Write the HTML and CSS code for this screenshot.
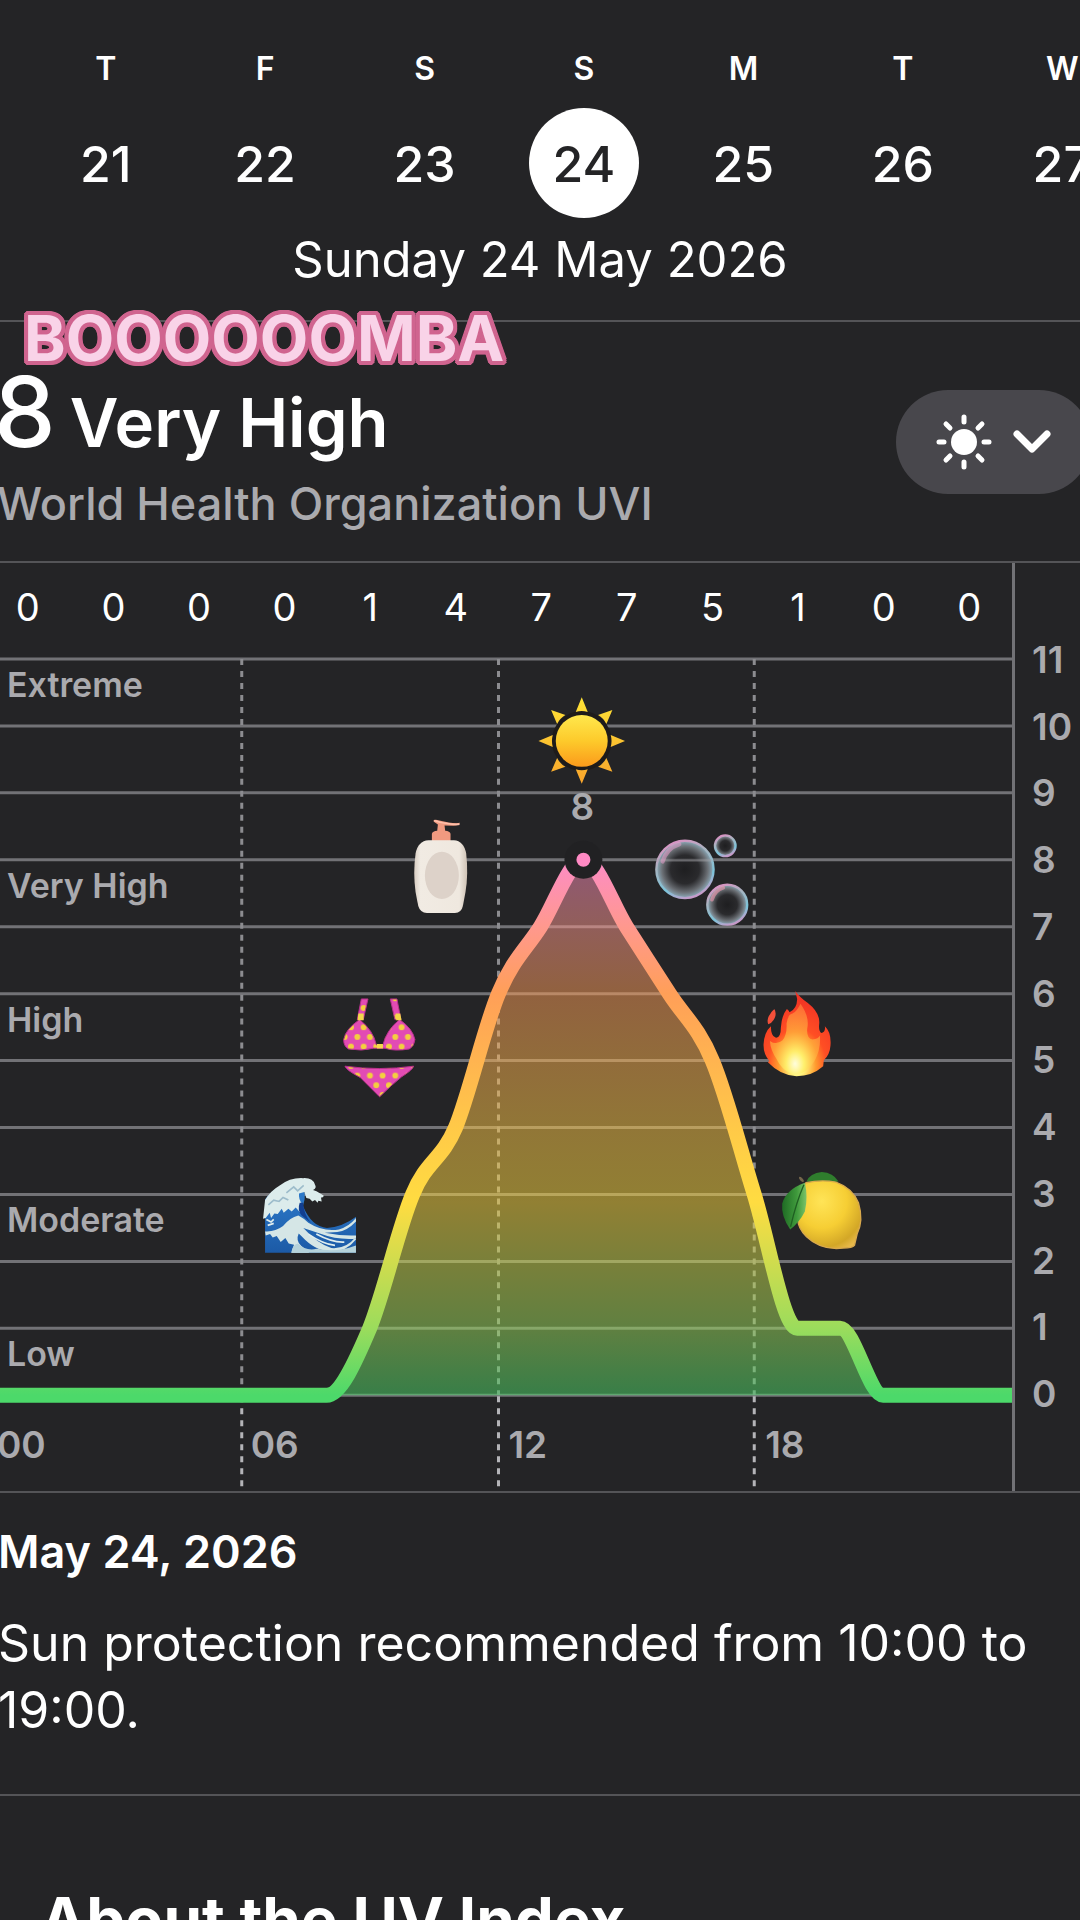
FILE: index.html
```html
<!DOCTYPE html>
<html lang="en">
<head>
    <meta charset="UTF-8">
    <meta name="viewport" content="width=device-width, initial-scale=1.0">
    <title>UV Index</title>
    <link rel="stylesheet" href="styles.css">
</head>
<body>
    <header class="calendar">
        <div class="week">
            <button class="day"><span class="day-name">T</span><span class="day-number">21</span></button>
            <button class="day"><span class="day-name">F</span><span class="day-number">22</span></button>
            <button class="day"><span class="day-name">S</span><span class="day-number">23</span></button>
            <button class="day selected"><span class="day-name">S</span><span class="day-number">24</span></button>
            <button class="day"><span class="day-name">M</span><span class="day-number">25</span></button>
            <button class="day"><span class="day-name">T</span><span class="day-number">26</span></button>
            <button class="day"><span class="day-name">W</span><span class="day-number">27</span></button>
        </div>
        <p class="full-date">Sunday 24 May 2026</p>
    </header>

    <main>
        <section class="summary">
            <p class="sticker">BOOOOOOMBA</p>
            <div>
                <h1><span class="uv-value">8</span> <span>Very High</span></h1>
                <p class="source">World Health Organization UVI</p>
            </div>
            <button class="picker" aria-label="Choose condition">
                <svg width="56" height="56" viewBox="0 0 56 56">
                    <circle cx="28" cy="28" r="13" fill="#fff"/>
                    <path d="M28 3v5M28 48v5M3 28h5M48 28h5M10 10l4 4M42 42l4 4M46 10l-4 4M14 42l-4 4" stroke="#fff" stroke-width="5" stroke-linecap="round"/>
                </svg>
                <svg width="38" height="24" viewBox="0 0 38 24">
                    <path d="M4 4l15 15L34 4" fill="none" stroke="#fff" stroke-width="7" stroke-linecap="round" stroke-linejoin="round"/>
                </svg>
            </button>
        </section>

        <section class="chart">
            <div class="plot">
                <div class="values">
                    <span>0</span><span>0</span><span>0</span><span>0</span><span>1</span><span>4</span>
                    <span>7</span><span>7</span><span>5</span><span>1</span><span>0</span><span>0</span>
                </div>
                <svg class="graph" viewBox="0 0 1028 852">
                    <defs>
                        <linearGradient id="uv" gradientUnits="userSpaceOnUse" x1="0" y1="756" x2="0" y2="220">
                            <stop offset="0" stop-color="#4cd96a"/>
                            <stop offset=".125" stop-color="#9bdc5c"/>
                            <stop offset=".36" stop-color="#ffdc41"/>
                            <stop offset=".5" stop-color="#ffc948"/>
                            <stop offset=".75" stop-color="#ff9f58"/>
                            <stop offset=".88" stop-color="#ff9890"/>
                            <stop offset="1" stop-color="#fc8cc6"/>
                        </linearGradient>
                        <linearGradient id="sun" x1="0" y1="0" x2="0" y2="1">
                            <stop offset="0" stop-color="#ffe84d"/>
                            <stop offset=".5" stop-color="#fdca2b"/>
                            <stop offset="1" stop-color="#fb9a1b"/>
                        </linearGradient>
                        <linearGradient id="rays" gradientUnits="userSpaceOnUse" x1="0" y1="50" x2="0" y2="310">
                            <stop offset="0" stop-color="#ffe436"/>
                            <stop offset="1" stop-color="#f9a52c"/>
                        </linearGradient>
                        <linearGradient id="rim" x1=".2" y1="0" x2=".6" y2="1">
                            <stop offset="0" stop-color="#e08fc4"/>
                            <stop offset=".35" stop-color="#a9b4c0"/>
                            <stop offset=".75" stop-color="#7cc4da"/>
                            <stop offset="1" stop-color="#c79ac9"/>
                        </linearGradient>
                        <radialGradient id="bubble">
                            <stop offset="0" stop-color="#1c1c1e" stop-opacity=".7"/>
                            <stop offset=".5" stop-color="#2c2c2f" stop-opacity=".8"/>
                            <stop offset=".8" stop-color="#74797f" stop-opacity=".9"/>
                            <stop offset="1" stop-color="#8fb0c0"/>
                        </radialGradient>
                        <linearGradient id="bottle" x1="0" y1="0" x2="1" y2="0">
                            <stop offset="0" stop-color="#d8cdc2"/>
                            <stop offset=".12" stop-color="#f1ebe3"/>
                            <stop offset=".85" stop-color="#efe8df"/>
                            <stop offset="1" stop-color="#cfc2b5"/>
                        </linearGradient>
                        <pattern id="dots" width="38" height="58" patternUnits="userSpaceOnUse" x="94" y="654">
                            <rect width="38" height="58" fill="#e24bb4"/>
                            <circle cx="19" cy="0" r="9" fill="#f3cf3f"/>
                            <circle cx="0" cy="29" r="9" fill="#f3cf3f"/>
                            <circle cx="38" cy="29" r="9" fill="#f3cf3f"/>
                            <circle cx="19" cy="58" r="9" fill="#f3cf3f"/>
                        </pattern>
                        <radialGradient id="fire" cx=".5" cy=".88" r=".8">
                            <stop offset="0" stop-color="#fffde0"/>
                            <stop offset=".15" stop-color="#fff27a"/>
                            <stop offset=".35" stop-color="#ff9a2e"/>
                            <stop offset=".55" stop-color="#ff4f24"/>
                            <stop offset="1" stop-color="#f23324"/>
                        </radialGradient>
                        <radialGradient id="flame" cx=".5" cy=".85" r=".9">
                            <stop offset="0" stop-color="#fffde0"/>
                            <stop offset=".2" stop-color="#fff06a"/>
                            <stop offset=".5" stop-color="#ffa83a"/>
                            <stop offset="1" stop-color="#ff6a38"/>
                        </radialGradient>
                        <radialGradient id="lemon" cx=".38" cy=".3" r=".8">
                            <stop offset="0" stop-color="#ffe457"/>
                            <stop offset=".5" stop-color="#f6ce34"/>
                            <stop offset=".85" stop-color="#d3a727"/>
                            <stop offset="1" stop-color="#e8b94a"/>
                        </radialGradient>
                        <linearGradient id="leaf" x1="0" y1="0" x2="1" y2="0">
                            <stop offset="0" stop-color="#1f6a24"/>
                            <stop offset=".6" stop-color="#3f9a3c"/>
                            <stop offset="1" stop-color="#7cc46a"/>
                        </linearGradient>
                        <linearGradient id="sea" x1="0" y1="0" x2="0" y2="1">
                            <stop offset="0" stop-color="#2f7fd0"/>
                            <stop offset="1" stop-color="#1c5aa6"/>
                        </linearGradient>
                    </defs>

                    <!-- index grid -->
                    <path class="grid" d="M0 19H1028M0 86H1028M0 153H1028M0 220H1028M0 287H1028M0 354H1028M0 421H1028M0 488H1028M0 555H1028M0 622H1028M0 689H1028M0 756H1028"/>
                    <path class="hours" d="M257 19V756M514 19V756M770 19V756"/>
                    <path class="hours below" d="M257 757V850M514 757V850M770 757V850"/>

                    <g class="level">
                        <text x="22" y="57">Extreme</text>
                        <text x="22" y="258">Very High</text>
                        <text x="22" y="392">High</text>
                        <text x="22" y="593">Moderate</text>
                        <text x="22" y="727">Low</text>
                    </g>

                    <!-- uv curve -->
                    <path fill="url(#uv)" opacity=".5" d="M342 756C356 756 371 722 385 689C399 655 414 588 428 555C442 521 457 521 471 488C485 454 500 387 514 354C528 320 542 309 556 287C570 265 585 220 599 220C613 220 628 265 642 287C656 309 671 332 685 354C699 376 714 387 728 421C742 454 756 510 770 555C784 600 799 689 813 689H856C870 689 885 756 899 756Z"/>
                    <path fill="none" stroke="url(#uv)" stroke-width="15" d="M0 756H342C356 756 371 722 385 689C399 655 414 588 428 555C442 521 457 521 471 488C485 454 500 387 514 354C528 320 542 309 556 287C570 265 585 220 599 220C613 220 628 265 642 287C656 309 671 332 685 354C699 376 714 387 728 421C742 454 756 510 770 555C784 600 799 689 813 689H856C870 689 885 756 899 756H1028"/>
                    <circle cx="599" cy="220" r="19" fill="#212123"/>
                    <circle cx="599" cy="220" r="7" fill="#ff8ac4"/>

                    <g class="tick">
                        <text x="598" y="180" text-anchor="middle">8</text>
                        <text x="12" y="819">00</text>
                        <text x="266" y="819">06</text>
                        <text x="524" y="819">12</text>
                        <text x="781" y="819">18</text>
                    </g>

                    <!-- sun and bubbles -->
                    <g transform="translate(535 40) scale(.3333)">
                        <circle cx="187" cy="183" r="90" fill="#1e1b1a"/>
                        <path fill="url(#rays)" d="M187 52l18 44q-18-6-36 0zM187 312l18-44q-18 6-36 0zM57 183l43-18q-5 18 0 36zM317 183l-43-18q5 18 0 36zM95 90l43 15q-16 9-25 27zM279 90l-43 15q16 9 25 27zM95 276l43-15q-16-9-25-27zM279 276l-43-15q16-9 25-27z"/>
                        <circle cx="187" cy="183" r="78" fill="url(#sun)"/>
                        <g fill="url(#bubble)" stroke="url(#rim)" stroke-width="7">
                            <circle cx="497" cy="569" r="86"/>
                            <circle cx="618" cy="498" r="31"/>
                            <circle cx="624" cy="675" r="60"/>
                        </g>
                        <path d="M415 542H579" stroke="#a4a4a8" stroke-opacity=".45" stroke-width="7"/>
                        <path d="M430 545q12-40 50-52" fill="none" stroke="#f0a0cf" stroke-opacity=".5" stroke-width="13" stroke-linecap="round"/>
                        <path d="M578 660q8-28 34-36" fill="none" stroke="#f49ab0" stroke-opacity=".6" stroke-width="11" stroke-linecap="round"/>
                    </g>

                    <!-- lotion and bikini -->
                    <g transform="translate(335 160) scale(.3333)">
                        <path d="M337 124v-22q2-8 16-9l2-19-12-8q-4-6 6-6l38 8q24 4 34 1-2 9-20 9l-26-1 2 16q14 1 16 9v22z" fill="#f09a80"/>
                        <path d="M344 62q20 8 40 9 22 4 36 2" fill="none" stroke="#ffc0aa" stroke-width="5"/>
                        <path d="M327 121h76q30 2 37 40 7 60-2 116l-8 42q-4 20-24 21h-84q-20-1-26-21l-8-42q-8-58 0-116 7-38 39-40z" fill="url(#bottle)"/>
                        <ellipse cx="367" cy="227" rx="51" ry="71" fill="#ddd2c9"/>
                        <g fill="url(#dots)" stroke="#b8308c" stroke-width="3">
                            <path d="M125 598h20l-14 62h-18zM212 598h20l12 62h-18z"/>
                            <path d="M120 660q42 34 50 76h20q10-44 50-76 40 28 46 60-2 20-16 28-44 8-74-2h-34q-36 10-76 2-14-8-14-28 6-32 48-60z"/>
                            <path d="M76 800q104 14 206 0-2 10-36 32-30 24-66 60-36-36-58-58-42-22-46-34z"/>
                        </g>
                        <path d="M116 642h16v20h-18zM228 642h14l4 20h-16zM172 733h18v14h-18z" fill="#f3d84a"/>
                    </g>

                    <!-- wave -->
                    <g transform="translate(255 500) scale(.3333)">
                        <path d="M76 180Q110 132 180 124Q205 160 190 200Q215 262 262 266Q310 262 349 232V340H76z" fill="url(#sea)"/>
                        <path d="M76 182q16-28 44-44 32-24 70-22 30-2 36 20 6 10-6 16 12 4 18 8l14 8q0 8-8 6l2 12-10-2-2 6-8-8-8 4-8-8-10-2-6-18-16 4q-2 18 10 32 6 16-8 24l-12-14-12 12-10-8-14 12-6-12-12 16-10-2-10 14-4-16-12 16-8 2z" fill="#dcecec"/>
                        <path d="M86 196l16-14 16 4 12-12 16 8M140 160l22-18 12 12 18-16" fill="none" stroke="#9dbccb" stroke-width="5"/>
                        <path d="M190 190q4 40 24 60l-28-22q-14-16-6-38z" fill="#123f90"/>
                        <path d="M76 276q30 2 54-16 20-26 46-32 16 8 30 22 44 28 92 20 30-8 51-34v10q-26 28-56 32l-38 2q50 10 94 8v10q-58 4-104-14l-54-18q44 48 84 60 44 4 74-34v8q-30 38-76 36-46 0-88-46l-8-8q-10 22 8 38l24 20h-54l8-24-16-4-10-16-14 12-12-18-12 4-8-10-13 4z" fill="#d5e6e6"/>
                        <path d="M155 340q2-24 20-28 24 24 56 16 60 12 118-10v22z" fill="#b5d2da"/>
                        <path d="M206 284q44 30 80 34M230 284q48 26 84 24M80 240l14 8 8-8M84 258l18-6" fill="none" stroke="#e1eeee" stroke-width="5"/>
                    </g>

                    <!-- fire and lemon -->
                    <g transform="translate(755 320) scale(.3333)">
                        <path d="M106 149q8 16-3 32-8 12-16 13-6-16 6-31 8-12 13-14z" fill="#f4503a"/>
                        <path d="M168 94q14 20 38 36 38 30 34 64-2 20 6 26 14-2 11-20 20 18 17 58-2 28-20 44l-2 18q-34 30-80 30-48-2-86-42l4-4q-18-22-17-50 2-36 22-54 0 30 14 34 16 2 16-30 2-36 18-56 6 4 8 10 22-10 23-40z" fill="url(#fire)"/>
                        <path d="M184 132q28 40 20 76-2 30 16 32 18-2 22-12 4 40-16 76-24 38-54 40-40-4-60-46-18-26-20-54 20 14 38-2 14-16 12-50 4-28 18-30 12-6 24-30z" fill="url(#flame)" opacity=".85"/>
                        <path d="M189 668q-14-12-8-16 8 0 14 14z" fill="#75664c"/>
                        <path d="M202 666q10-24 46-28 34 2 50 28-40 6-96 0z" fill="#2f7d2d"/>
                        <path d="M200 670q46-10 90-2 50 18 68 62 16 54-4 94l-8 34q-6 8-34 8-66 8-110-34-26-26-26-52l4-80z" fill="url(#lemon)" stroke="#d9a94c" stroke-width="4"/>
                        <path d="M197 670q10 42 0 86-16 32-44 54-28-40-24-78 12-42 68-62z" fill="url(#leaf)"/>
                        <path d="M194 676q-22 50-40 126" fill="none" stroke="#1f5f22" stroke-width="4"/>
                    </g>
                </svg>
            </div>
            <div class="axis">
                <span>11</span><span>10</span><span>9</span><span>8</span><span>7</span><span>6</span>
                <span>5</span><span>4</span><span>3</span><span>2</span><span>1</span><span>0</span>
            </div>
        </section>

        <section class="advice">
            <h2>May 24, 2026</h2>
            <p>Sun protection recommended from 10:00 to 19:00.</p>
        </section>

        <section class="about">
            <h2>About the UV Index</h2>
        </section>
    </main>
</body>
</html>
```
FILE: styles.css
```css
:root {
    --background: #242426;
    --text: #ffffff;
    --muted: #aaaaae;
    --divider: #545457;
    --grid: #727276;
    --outline: #d0648f;
}

* {
    margin: 0;
    padding: 0;
    box-sizing: border-box;
}

body {
    height: 100vh;
    overflow: hidden;
    background-color: var(--background);
    color: var(--text);
    font-family: Inter, "Liberation Sans", sans-serif;
}

button {
    border: none;
    background: none;
    color: inherit;
    font-family: inherit;
    cursor: pointer;
}

.calendar {
    padding-top: 48px;
    height: 322px;
    border-bottom: 2px solid var(--divider);
}

.week {
    display: grid;
    grid-template-columns: repeat(7, 1fr);
    margin: 0 -62px 0 26px;
}

.day {
    display: flex;
    flex-direction: column;
    align-items: center;
    gap: 18px;
}

.day-name {
    font-size: 32px;
    line-height: 42px;
    font-weight: 600;
}

.day-number {
    width: 110px;
    height: 110px;
    border-radius: 50%;
    font-size: 50px;
    line-height: 112px;
    font-weight: 500;
}

.selected .day-number {
    background-color: #fff;
    color: var(--background);
}

.full-date {
    margin-top: 10px;
    text-align: center;
    font-size: 49px;
    line-height: 64px;
}

.summary {
    position: relative;
    display: flex;
    justify-content: space-between;
    align-items: flex-start;
    height: 239px;
    padding-top: 40px;
}

.sticker {
    position: absolute;
    top: -24px;
    left: 24px;
    font-size: 63px;
    line-height: 80px;
    font-weight: 700;
    color: #f9d3e8;
    /* round outline */
    text-shadow:
        4px 0 var(--outline), -4px 0 var(--outline),
        0 4px var(--outline), 0 -4px var(--outline),
        4px 2px var(--outline), 4px -2px var(--outline),
        -4px 2px var(--outline), -4px -2px var(--outline),
        2px 4px var(--outline), 2px -4px var(--outline),
        -2px 4px var(--outline), -2px -4px var(--outline),
        3px 3px var(--outline), 3px -3px var(--outline),
        -3px 3px var(--outline), -3px -3px var(--outline);
}

h1 {
    display: flex;
    align-items: baseline;
    gap: 14px;
    margin-left: -6px;
    font-size: 67px;
    line-height: 100px;
    font-weight: 600;
}

.uv-value {
    font-size: 98px;
    font-weight: 500;
}

.source {
    margin-left: -3px;
    font-size: 45px;
    line-height: 62px;
    font-weight: 500;
    color: var(--muted);
}

.picker {
    display: flex;
    align-items: center;
    gap: 21px;
    width: 195px;
    height: 104px;
    margin: 28px -11px 0 0;
    padding-left: 40px;
    border-radius: 52px;
    background-color: #48474c;
}

.chart {
    display: grid;
    grid-template-columns: 1fr 68px;
    border-top: 2px solid var(--divider);
    border-bottom: 2px solid var(--divider);
}

.plot {
    margin-left: -15px;
}

.values {
    display: grid;
    grid-template-columns: repeat(12, 1fr);
    height: 77px;
    text-align: center;
    font-size: 38px;
    line-height: 88px;
}

.graph {
    display: block;
    width: 100%;
}

.grid {
    stroke: var(--grid);
    stroke-width: 3;
}

.hours {
    stroke: #8c8c90;
    stroke-width: 3;
    stroke-dasharray: 6 6;
}

.below {
    stroke: #b4b4b8;
}

.level {
    fill: var(--muted);
    font-size: 34px;
    font-weight: 600;
}

.tick {
    fill: var(--muted);
    font-size: 37px;
    font-weight: 600;
}

.axis {
    display: flex;
    flex-direction: column;
    justify-content: space-between;
    padding: 76px 0 76px 17px;
    border-left: 3px solid var(--grid);
    font-size: 37px;
    line-height: 42px;
    font-weight: 600;
    color: var(--muted);
}

.advice {
    height: 303px;
    padding-top: 29px;
    border-bottom: 2px solid var(--divider);
}

.advice h2 {
    margin-left: -2px;
    font-size: 45px;
    line-height: 60px;
    font-weight: 600;
}

.advice p {
    margin: 28px 0 0 -2px;
    font-size: 50px;
    line-height: 67px;
}

.about {
    padding: 86px 40px;
}

.about h2 {
    font-size: 62px;
    line-height: 76px;
    font-weight: 700;
}
```
